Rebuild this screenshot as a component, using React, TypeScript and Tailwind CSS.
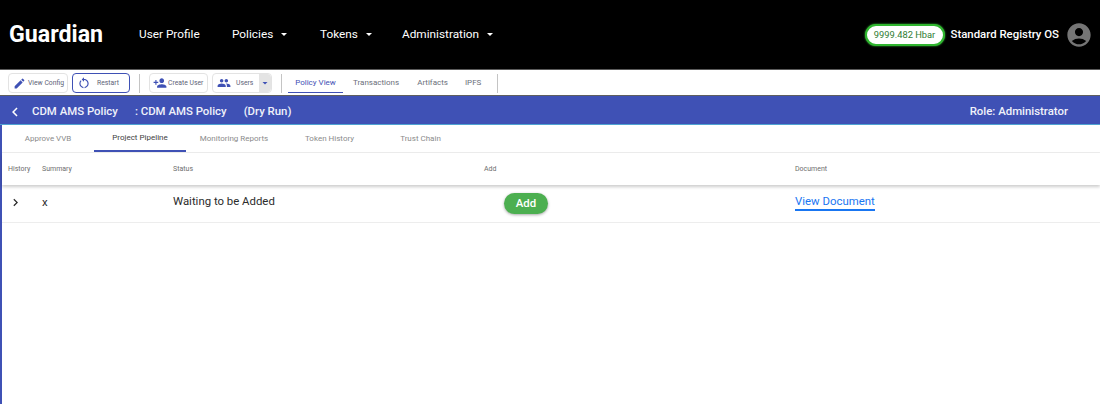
import { MdAccountCircle, MdArrowDropDown, MdChevronLeft, MdChevronRight, MdEdit, MdPeople, MdPersonAdd, MdRestartAlt } from "react-icons/md";

function NavItem({ label, menu }: { label: string; menu?: boolean }) {
    return (
        <div className="flex items-center text-[11.8px] text-white">
            <span>{label}</span>
            {menu && <span className="ml-[8px] w-0 h-0 border-x-[3.5px] border-x-transparent border-t-[3.5px] border-t-white" />}
        </div>
    );
}

function Separator() {
    return <div className="w-px h-[19px] bg-[#c4c4c4]" />;
}

export default function App() {
    return (
        <div className="w-[1100px] h-[404px] overflow-hidden bg-white font-['Roboto',sans-serif]">
            {/* Header */}
            <div className="h-[70px] bg-black border-b border-[#5a5a5a] flex items-center pl-[9px] pr-[7px]">
                <div className="text-[23.2px] font-bold text-white w-[130px] leading-none">Guardian</div>
                <div className="w-[93px]"><NavItem label="User Profile" /></div>
                <div className="w-[88px]"><NavItem label="Policies" menu /></div>
                <div className="w-[82px]"><NavItem label="Tokens" menu /></div>
                <NavItem label="Administration" menu />
                <div className="ml-auto flex items-center">
                    <div className="w-[80px] h-[22px] rounded-full bg-white border-2 border-[#2fb52f] flex items-center justify-center text-[9.3px] text-[#2e7d32] shadow-[0_0_2px_#3fd03f]">
                        9999.482 Hbar
                    </div>
                    <span className="ml-[6px] text-[11.4px] font-medium text-white">Standard Registry OS</span>
                    <MdAccountCircle className="ml-[6px] text-[#757575]" size={28} />
                </div>
            </div>

            {/* Toolbar */}
            <div className="h-[26px] border-b border-[#5f5f5f] flex items-center pl-[8px] pt-px">
                <button className="w-[60px] h-[20px] rounded-[4px] border border-[#e3e3e3] flex items-center pl-[4px] text-[6.8px] text-[#5d6277]">
                    <MdEdit className="text-[#3f51b5]" size={13} />
                    <span className="ml-[2px] whitespace-nowrap">View Config</span>
                </button>
                <button className="ml-[4px] w-[58px] h-[20px] rounded-[4px] border border-[#3f51b5] flex items-center pl-[4px] text-[6.8px] text-[#5d6277]">
                    <MdRestartAlt className="text-[#3f51b5]" size={14} />
                    <span className="ml-[6px]">Restart</span>
                </button>
                <div className="ml-[9px]"><Separator /></div>
                <button className="ml-[9px] w-[59px] h-[20px] rounded-[4px] border border-[#e3e3e3] flex items-center pl-[3px] text-[6.8px] text-[#5d6277]">
                    <MdPersonAdd className="text-[#3f51b5]" size={14} />
                    <span className="ml-[1px] whitespace-nowrap">Create User</span>
                </button>
                <div className="ml-[4px] w-[60px] h-[20px] rounded-[4px] border border-[#e3e3e3] flex items-center text-[6.8px] text-[#5d6277]">
                    <MdPeople className="ml-[4px] text-[#3f51b5]" size={14} />
                    <span className="ml-[5px]">Users</span>
                    <div className="ml-auto w-[12px] h-full bg-[#e4e4e4] rounded-r-[4px] flex items-center justify-center">
                        <MdArrowDropDown className="text-[#3f51b5]" size={16} />
                    </div>
                </div>
                <div className="ml-[9px]"><Separator /></div>
                <div className="ml-[6px] w-[55px] h-[20px] border-b border-[#3f51b5] flex items-center justify-center text-[8px] text-[#3f51b5]">Policy View</div>
                <div className="ml-[10px] text-[8px] text-[#6b6f7a]">Transactions</div>
                <div className="ml-[18px] text-[8px] text-[#6b6f7a]">Artifacts</div>
                <div className="ml-[17px] text-[8px] text-[#6b6f7a]">IPFS</div>
                <div className="ml-[16px]"><Separator /></div>
            </div>

            {/* Policy bar */}
            <div className="h-[29px] bg-[#3f51b5] border-b border-[#4fa3d1] flex items-center pl-[6px] pt-[3px] text-[11.4px] font-medium text-[#f0f1fa]">
                <MdChevronLeft className="text-white" size={18} />
                <span className="ml-[8px]">CDM AMS Policy</span>
                <span className="ml-[17px]">: CDM AMS Policy</span>
                <span className="ml-[17px]">(Dry Run)</span>
                <span className="ml-auto mr-[32px]">Role: Administrator</span>
            </div>

            {/* Content */}
            <div className="h-[279px] border-l-2 border-[#3f51b5]">
                <div className="h-[28px] border-b border-[#ededed] flex text-[8px] text-[#8b8b8b]">
                    <div className="w-[92px] flex items-center justify-center pt-px">Approve VVB</div>
                    <div className="w-[92px] flex items-center justify-center pt-px border-b-2 border-[#3f51b5] text-[#424242]">Project Pipeline</div>
                    <div className="w-[96px] flex items-center justify-center pt-px">Monitoring Reports</div>
                    <div className="w-[95px] flex items-center justify-center pt-px">Token History</div>
                    <div className="w-[87px] flex items-center justify-center pt-px">Trust Chain</div>
                </div>
                <div className="h-[32px] grid grid-cols-[34px_131px_311px_311px_1fr] items-center pl-[6px] text-[7px] text-[#6e6e6e] shadow-[0_2px_3px_rgba(0,0,0,0.2)]">
                    <span>History</span>
                    <span>Summary</span>
                    <span>Status</span>
                    <span>Add</span>
                    <span>Document</span>
                </div>
                <div className="h-[38px] grid grid-cols-[34px_131px_311px_311px_1fr] items-center pl-[6px] border-b border-[#ededed] text-[11.4px] text-[#2b2b2b]">
                    <MdChevronRight className="mb-[2px] text-[#2b2b2b]" size={15} />
                    <span className="mb-[1px]">x</span>
                    <span className="mb-[3px]">Waiting to be Added</span>
                    <div className="pl-[20px]">
                        <button className="w-[44px] h-[21px] rounded-full bg-[#4caf50] text-white font-medium shadow-[0_1px_3px_rgba(0,0,0,0.35)]">Add</button>
                    </div>
                    <div className="mb-[3px]">
                        <span className="text-[#1976f2] border-b-2 border-[#1976f2] pb-[1px]">View Document</span>
                    </div>
                </div>
            </div>
        </div>
    );
}
